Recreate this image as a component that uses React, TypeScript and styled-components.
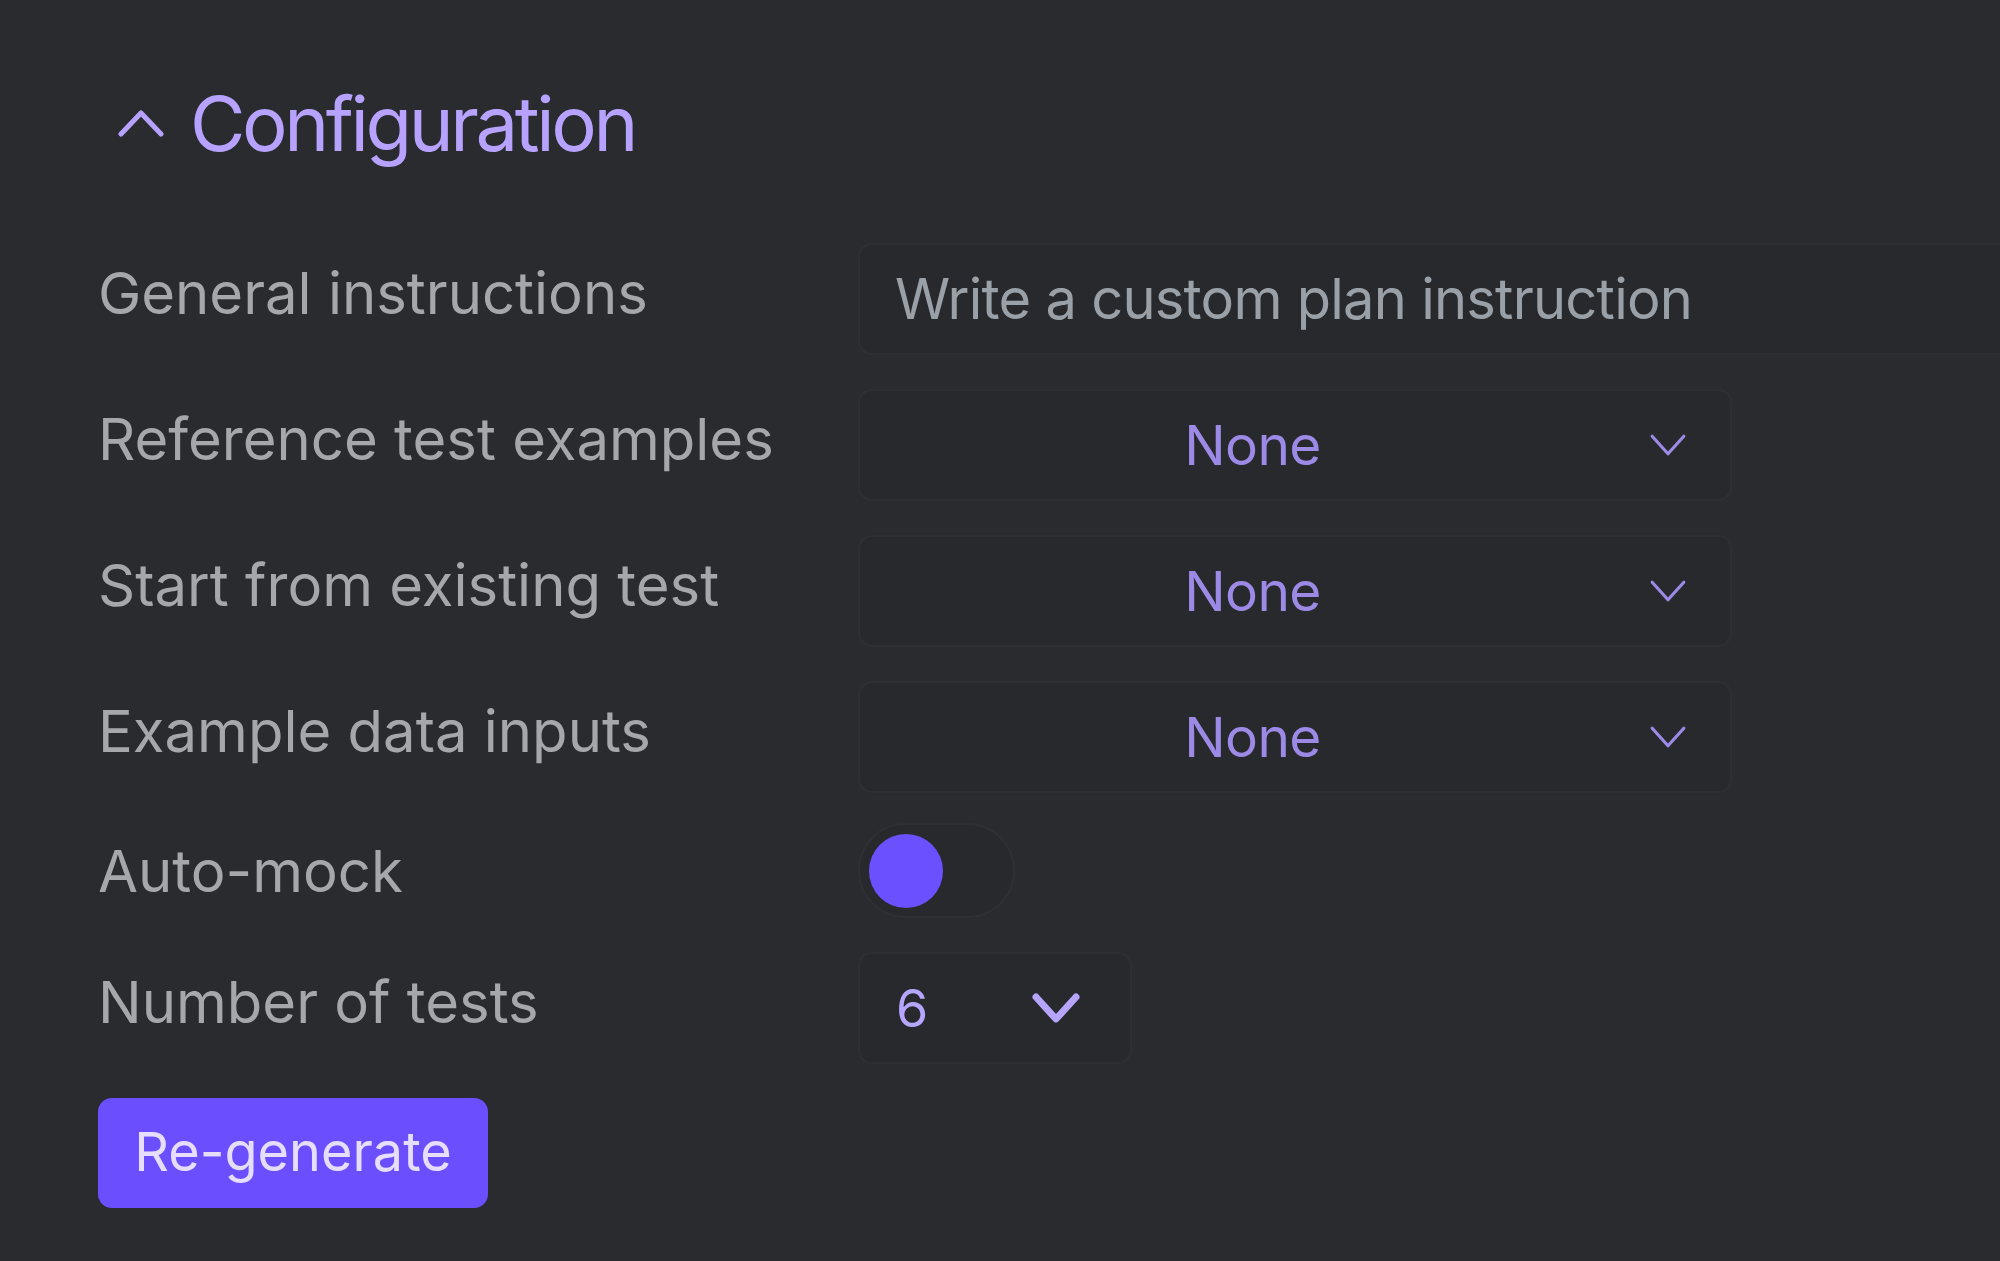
import React from "react";
import styled, { createGlobalStyle } from "styled-components";

const Global = createGlobalStyle`
  html, body { margin: 0; padding: 0; background: #2a2b2e; }
  body { font-family: Inter, "Noto Sans", "Liberation Sans", sans-serif; -webkit-font-smoothing: antialiased; }
  #root { min-height: 1261px; }
`;

const Page = styled.div`
  width: 2000px;
  height: 1261px;
  overflow: hidden;
  background: #2a2b2e;
  box-sizing: border-box;
  padding: 84px 0 0 98px;
`;

const Header = styled.div`
  display: flex;
  align-items: center;
  gap: 26px;
  padding-left: 20px;
  height: 78px;
  margin-bottom: 81px;
`;

const Title = styled.h2`
  margin: 0;
  font-size: 76px;
  line-height: 78px;
  font-weight: 400;
  color: #b7a3ff;
  letter-spacing: -3.4px;
`;

const Form = styled.div`
  display: flex;
  flex-direction: column;
  gap: 34px;
`;

const Row = styled.div<{ $shift?: number }>`
  display: flex;
  align-items: center;
  margin-top: ${(p) => p.$shift ?? 0}px;
`;

const Label = styled.div<{ $lift?: number }>`
  width: 760px;
  flex: none;
  font-size: 58px;
  line-height: 70px;
  color: #a6a7ab;
  padding-bottom: ${(p) => p.$lift ?? 12}px;
`;

const Field = styled.div<{ $w: number }>`
  box-sizing: border-box;
  width: ${(p) => p.$w}px;
  height: 112px;
  flex: none;
  display: flex;
  align-items: center;
  background: #28292c;
  border: 2px solid #2e2f33;
  border-radius: 14px;
`;

const Placeholder = styled.span`
  padding-left: 35px;
  font-size: 56px;
  letter-spacing: -0.75px;
  color: #9aa0a8;
`;

const SelectValue = styled.span`
  flex: 1;
  text-align: center;
  font-size: 55px;
  letter-spacing: -0.6px;
  color: #9d8ae6;
  padding-right: 4px;
`;

const SelectIcon = styled.svg`
  width: 38px;
  height: 24px;
  margin-right: 43px;
  flex: none;
`;

const NumberValue = styled.span`
  flex: 1;
  padding-left: 36px;
  font-size: 52px;
  color: #b6a6ff;
`;

const NumberIcon = styled.svg`
  width: 48px;
  height: 30px;
  margin-right: 50px;
  flex: none;
`;

const Track = styled.div`
  box-sizing: border-box;
  width: 157px;
  height: 95px;
  border-radius: 48px;
  background: #28292c;
  border: 2px solid #2f3034;
  display: flex;
  align-items: center;
  padding-left: 9px;
`;

const Knob = styled.div`
  width: 74px;
  height: 74px;
  border-radius: 50%;
  background: #6b50ff;
`;

const Button = styled.button`
  box-sizing: border-box;
  width: 390px;
  height: 110px;
  border: none;
  border-radius: 14px;
  background: #6b4fff;
  color: #e6ddff;
  font-family: inherit;
  font-size: 54px;
  padding: 0 0 4px 0;
  cursor: pointer;
`;

const ChevronDown = ({ Comp, sw, color }: { Comp: typeof SelectIcon; sw: number; color: string }) => (
  <Comp viewBox="0 0 48 30" fill="none">
    <polyline
      points="4,4 24,26 44,4"
      stroke={color}
      strokeWidth={sw}
      strokeLinecap="round"
      strokeLinejoin="round"
    />
  </Comp>
);

const CaretUp = styled.svg`
  width: 46px;
  height: 28px;
  flex: none;
`;

const selects = ["Reference test examples", "Start from existing test", "Example data inputs"];

export default function App() {
  return (
    <>
      <Global />
      <Page>
        <Header>
          <CaretUp viewBox="0 0 46 28" fill="none">
            <polyline
              points="3,25 23,4 43,25"
              stroke="#b7a3ff"
              strokeWidth={5}
              strokeLinecap="round"
              strokeLinejoin="round"
            />
          </CaretUp>
          <Title>Configuration</Title>
        </Header>
        <Form>
          <Row>
            <Label>General instructions</Label>
            <Field $w={1200}>
              <Placeholder>Write a custom plan instruction</Placeholder>
            </Field>
          </Row>
          {selects.map((s) => (
            <Row key={s}>
              <Label>{s}</Label>
              <Field $w={874}>
                <SelectValue>None</SelectValue>
                <ChevronDown Comp={SelectIcon} sw={4} color="#9d8ae6" />
              </Field>
            </Row>
          ))}
          <Row $shift={-4}>
            <Label $lift={0}>Auto-mock</Label>
            <Track>
              <Knob />
            </Track>
          </Row>
          <Row>
            <Label>Number of tests</Label>
            <Field $w={274}>
              <NumberValue>6</NumberValue>
              <ChevronDown Comp={NumberIcon} sw={7} color="#b6a4ff" />
            </Field>
          </Row>
          <Row>
            <Button>Re-generate</Button>
          </Row>
        </Form>
      </Page>
    </>
  );
}
